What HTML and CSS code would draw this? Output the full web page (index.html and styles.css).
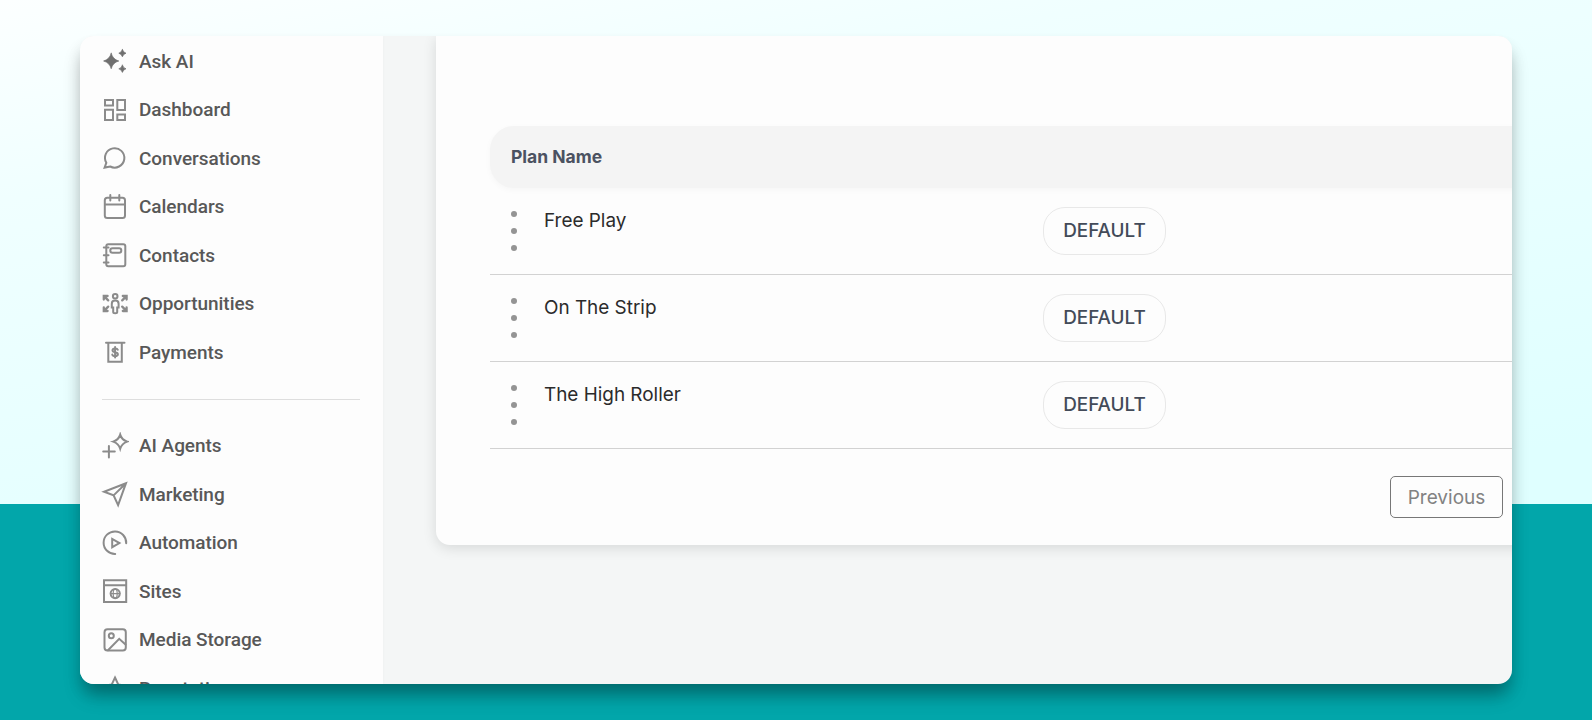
FILE: index.html
```html
<!DOCTYPE html>
<html lang="en">
  <head>
    <meta charset="UTF-8" />
    <meta name="viewport" content="width=device-width, initial-scale=1.0" />
    <title>Plans</title>
    <link rel="stylesheet" href="styles.css">
  </head>

  <body>
    <div class="window">
      <!-- Sidebar -->
      <nav class="sidebar">
        <a class="item">
          <svg class="icon solid" viewBox="0 0 28 28"><path d="M10.2 6.3Q11.8 12.4 17.8 14Q11.8 15.6 10.2 21.7Q8.6 15.6 2.6 14Q8.6 12.4 10.2 6.3ZM21.4 2.6Q22.2 5.4 25 6.2Q22.2 7 21.4 9.8Q20.6 7 17.8 6.2Q20.6 5.4 21.4 2.6ZM21.4 18.2Q22.2 21 25 21.8Q22.2 22.6 21.4 25.4Q20.6 22.6 17.8 21.8Q20.6 21 21.4 18.2Z" /></svg>
          <span>Ask AI</span>
        </a>
        <a class="item">
          <svg class="icon" viewBox="0 0 28 28"><path d="M4 4H12V9.5H4ZM16.3 4H24V14H16.3ZM4 13.8H12V24H4ZM16.3 18.4H24V24H16.3Z" /></svg>
          <span>Dashboard</span>
        </a>
        <a class="item">
          <svg class="icon" viewBox="0 0 28 28"><path d="M3.6 23.6L5.3 18.8A9.7 9.7 0 1 1 9.2 22.5Z" /></svg>
          <span>Conversations</span>
        </a>
        <a class="item">
          <svg class="icon" viewBox="0 0 28 28"><rect x="3.8" y="4.8" width="20.2" height="20.2" rx="2.5" /><path d="M4 11.5H24M9.3 2V7.5M18.3 2V7.5" /></svg>
          <span>Calendars</span>
        </a>
        <a class="item">
          <svg class="icon" viewBox="0 0 28 28"><rect x="5.3" y="3.2" width="19" height="22" rx="2" /><rect x="9.3" y="7.2" width="11" height="4.6" rx="2.2" /><path d="M2.8 6.5H7.5M2.8 14.2H7.5M2.8 21.6H7.5" /></svg>
          <span>Contacts</span>
        </a>
        <a class="item">
          <svg class="icon" viewBox="0 0 28 28"><circle cx="14.2" cy="6.2" r="2.3" /><path d="M10.8 13.8Q10.8 10.6 14.2 10.6Q17.6 10.6 17.6 13.8V17.6H16.2V22Q16.2 23.2 14.2 23.2Q12.2 23.2 12.2 22V17.6H10.8Z" /><path class="arrows" d="M7.2 10.4L3.2 6.4M2.8 9.6V6H6.6M21.2 10.4L25.2 6.4M25.6 9.6V6H21.8M7.2 16.6L3.2 20.6M2.8 17.4V21H6.6M21.2 16.6L25.2 20.6M25.6 17.4V21H21.8" /></svg>
          <span>Opportunities</span>
        </a>
        <a class="item">
          <svg class="icon" viewBox="0 0 28 28"><path d="M5 4.8H23.5M7.3 4.8V23.8H20.8V4.8" /><path d="M16.8 11.7Q16.4 10.4 14.1 10.4Q11.5 10.4 11.5 12.3Q11.5 13.8 14.1 14.2Q16.9 14.6 16.9 16.3Q16.9 18.1 14.1 18.1Q11.6 18.1 11.3 16.6M14.1 9V19.5" /></svg>
          <span>Payments</span>
        </a>
        <hr class="divider" />
        <a class="item">
          <svg class="icon" viewBox="0 0 28 28"><path d="M19.2 2.6Q20.8 7.9 26.2 9.6Q20.8 11.4 19.2 16.8Q17.6 11.4 12.2 9.6Q17.6 7.9 19.2 2.6ZM7.9 13.9V25.4M2.2 19.6H13.8" /></svg>
          <span>AI Agents</span>
        </a>
        <a class="item">
          <svg class="icon" viewBox="0 0 28 28"><path d="M25 3.2L3 11.7L12.6 15.4L17.1 25.2ZM12.6 15.4L25 3.2" /></svg>
          <span>Marketing</span>
        </a>
        <a class="item">
          <svg class="icon" viewBox="0 0 28 28"><path d="M14.2 25A11.3 11.3 0 1 1 25.2 14.2M11.2 10V18.2L18.4 14.1Z" /></svg>
          <span>Automation</span>
        </a>
        <a class="item">
          <svg class="icon" viewBox="0 0 28 28"><path d="M3 3.2H25.2V25H3ZM3 8.3H25" /><circle cx="14.2" cy="16.6" r="4.6" /><ellipse class="thin" cx="14.2" cy="16.6" rx="2" ry="4.6" /><path class="thin" d="M9.6 16.6H18.8" /></svg>
          <span>Sites</span>
        </a>
        <a class="item">
          <svg class="icon" viewBox="0 0 28 28"><rect x="3.5" y="3.3" width="21.3" height="21.3" rx="3" /><circle cx="10.3" cy="9.7" r="2.5" /><path d="M7 24.3L18.2 12.8L24.5 18.5" /></svg>
          <span>Media Storage</span>
        </a>
        <a class="item">
          <svg class="icon" viewBox="0 0 28 28"><path d="M14 3.5L17.3 10.6L25 11.6L19.3 17L20.8 24.8L14 21L7.2 24.8L8.7 17L3 11.6L10.7 10.6Z" /></svg>
          <span>Reputation</span>
        </a>
      </nav>

      <!-- Plans table -->
      <main class="content">
        <section class="card">
          <div class="table-head">Plan Name</div>
          <div class="row">
            <div class="dots"><i></i><i></i><i></i></div>
            <span class="plan">Free Play</span>
            <span class="badge">DEFAULT</span>
          </div>
          <div class="row">
            <div class="dots"><i></i><i></i><i></i></div>
            <span class="plan">On The Strip</span>
            <span class="badge">DEFAULT</span>
          </div>
          <div class="row">
            <div class="dots"><i></i><i></i><i></i></div>
            <span class="plan">The High Roller</span>
            <span class="badge">DEFAULT</span>
          </div>
          <div class="pager">
            <button class="previous">Previous</button>
          </div>
        </section>
      </main>
    </div>
  </body>
</html>
```
FILE: styles.css
```css
/* General Styles */

* {
  box-sizing: border-box;
}

body {
  margin: 0;
  height: 720px;
  padding: 36px 80px;
  overflow: hidden;
  font-family: Inter, sans-serif;
  background: linear-gradient(#02a6aa, #02a6aa) 0 504px no-repeat,
    linear-gradient(170deg, #fcffff 0%, #f0ffff 20%, #dfffff 72%);
}

.window {
  display: flex;
  height: 648px;
  overflow: hidden;
  border-radius: 14px;
  background: #f4f6f6;
  box-shadow: 0 14px 20px -4px rgba(0, 0, 0, 0.3),
    0 10px 14px rgba(0, 0, 0, 0.1);
}

/* Sidebar */

.sidebar {
  flex: none;
  width: 303px;
  padding-top: 1px;
  background: #fdfdfd;
  box-shadow: 0 0 4px rgba(0, 0, 0, 0.03);
}

.item {
  display: flex;
  align-items: center;
  gap: 10px;
  height: 48.5px;
  padding-left: 21px;
  color: #585858;
  font-family: Roboto, sans-serif;
  font-size: 19px;
  font-weight: 500;
  letter-spacing: -0.04px;
}

.icon {
  width: 28px;
  height: 28px;
  fill: none;
  stroke: #8b8b8b;
  stroke-width: 2;
  stroke-linecap: round;
}

.icon.solid {
  fill: #707070;
  stroke: #707070;
  stroke-width: 0.7;
}

.icon .thin {
  stroke-width: 1.2;
}

.icon .arrows {
  stroke-width: 2.3;
}

.divider {
  height: 1px;
  margin: 22px 23px 22px 22px;
  border: 0;
  background: #dedede;
}

/* Plans table */

.content {
  flex: 1;
  min-width: 0;
  padding-left: 53px;
}

.card {
  width: 1130px;
  height: 509px;
  padding: 90px 0 0 54px;
  border-radius: 0 0 0 14px;
  background: #fdfdfd;
  box-shadow: 0 3px 14px rgba(0, 0, 0, 0.12);
}

.table-head {
  height: 62px;
  padding-left: 21px;
  border-radius: 24px 0 0 24px;
  background: #f4f4f4;
  box-shadow: 0 2px 6px rgba(0, 0, 0, 0.03);
  color: #4b5261;
  font-size: 17.5px;
  font-weight: 700;
  line-height: 61px;
}

.row {
  display: grid;
  grid-template-columns: 54px 499px auto;
  height: 87px;
  padding-top: 19px;
  border-bottom: 1px solid #d2d2d2;
}

.dots {
  display: flex;
  flex-direction: column;
  gap: 11px;
  padding: 4px 0 0 21px;
}

.dots i {
  width: 6px;
  height: 6px;
  border-radius: 50%;
  background: #949494;
}

.plan {
  color: #2b2b2b;
  font-size: 18.9px;
  line-height: 27px;
}

.badge {
  width: 123px;
  height: 48px;
  border: 1px solid #e8e8e8;
  border-radius: 22px;
  color: #434b59;
  font-size: 18.9px;
  font-weight: 500;
  line-height: 46px;
  text-align: center;
}

.pager {
  padding: 27px 0 0 900px;
}

.previous {
  display: block;
  width: 113px;
  height: 42px;
  padding: 0;
  border: 1px solid #777;
  border-radius: 5px;
  background: #fdfdfd;
  color: #828282;
  font-family: Inter, sans-serif;
  font-size: 19px;
}
```
